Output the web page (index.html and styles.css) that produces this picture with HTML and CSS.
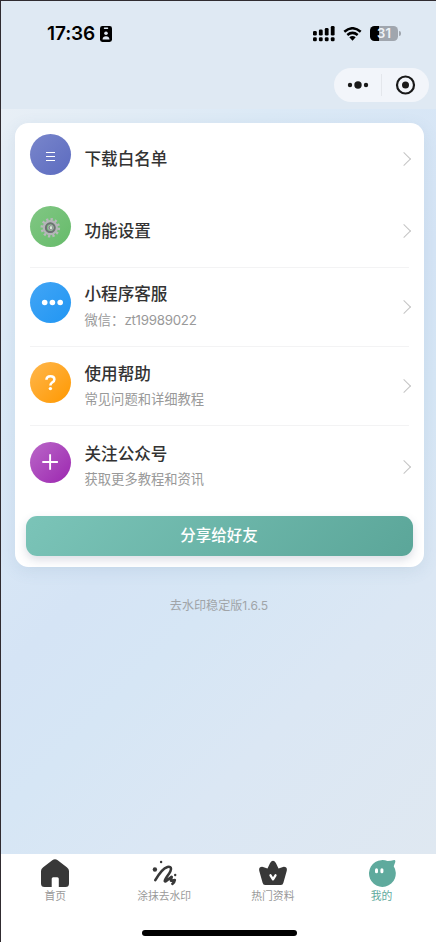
FILE: index.html
```html
<!DOCTYPE html>
<html lang="zh-CN">
<head>
<meta charset="utf-8">
<title>我的</title>
<link rel="stylesheet" href="styles.css">
</head>
<body>
<div class="app">
  <header class="top">
    <div class="status">
      <span class="clock">17:36</span>
      <svg class="badge" width="12" height="16" viewBox="0 0 12 16"><rect width="12" height="16" rx="2.4"/><rect x="3.8" y="1.6" width="4.4" height="1.3" rx=".6" fill="#dfe9f3"/><circle cx="6" cy="7.2" r="1.8" fill="#dfe9f3"/><path d="M2.5 13.6c.2-2.600 1.500-3.400 3.500-3.400s3.300.8 3.500 3.400z" fill="#dfe9f3"/></svg>
      <span class="spacer"></span>
      <svg class="signal" width="22" height="16" viewBox="0 0 22 16"><rect x="0" y="5" width="3.800" height="4.500" rx="1.300"/><rect x="5.900" y="3.500" width="3.800" height="6" rx="1.300"/><rect x="11.800" y="2" width="3.800" height="7.500" rx="1.300"/><rect x="17.800" y="0" width="3.800" height="9.500" rx="1.300"/><rect x="0" y="11.300" width="3.800" height="4" rx="1.300"/><rect x="5.900" y="11.300" width="3.800" height="4" rx="1.300"/><rect x="11.800" y="11.300" width="3.800" height="4" rx="1.300"/><rect x="17.800" y="11.300" width="3.800" height="4" rx="1.300"/></svg>
      <svg class="wifi" width="19" height="14" viewBox="0 0 19 14"><path d="M1.300 4.800Q9.500-2.300 17.700 4.800M4.300 8Q9.500 3.700 14.700 8" fill="none" stroke="#000" stroke-width="2.500"/><path d="M6.300 10.300Q9.500 7.600 12.700 10.300L9.500 13.800z"/></svg>
      <span class="battery"><span class="cell">31</span><i class="tip"></i></span>
    </div>
    <div class="capsule">
      <svg width="95" height="34" viewBox="0 0 95 34"><g fill="#191919"><circle cx="16" cy="17" r="2.200"/><circle cx="24" cy="17" r="3.700"/><circle cx="32" cy="17" r="2.200"/><circle cx="71.500" cy="17" r="3.500"/></g><circle cx="71.500" cy="17" r="8.500" fill="none" stroke="#191919" stroke-width="2.200"/><path d="M47.500 6v22" stroke="#e4e7ec"/></svg>
    </div>
  </header>
  <main class="page">
    <section class="card">
      <div class="row plain">
        <span class="dot indigo"><svg width="41" height="41" viewBox="0 0 41 41"><path d="M16 18.500h9M16 22.500h9M16 26.500h9" stroke="#fff" stroke-width="1.200"/></svg></span>
        <div class="words"><b>下载白名单</b></div><i class="arrow"></i>
      </div>
      <div class="row plain lined">
        <span class="dot green"><svg width="41" height="41" viewBox="0 0 41 41"><g fill="none"><circle cx="20.300" cy="21.700" r="8.300" stroke="#b9b8bc" stroke-width="3" stroke-dasharray="2.200 2.146"/><circle cx="20.300" cy="21.700" r="6.400" stroke="#b4b4b8" stroke-width="2.400"/><circle cx="20.300" cy="21.700" r="4.400" stroke="#6d6f73" stroke-width="2"/><circle cx="20.700" cy="21.700" r="2.600" fill="#85888b" stroke="#a9acae" stroke-width="1"/><ellipse cx="21" cy="21.700" rx="1.200" ry="1.600" fill="#d9ead9"/></g></svg></span>
        <div class="words"><b>功能设置</b></div><i class="arrow"></i>
      </div>
      <div class="row lined up">
        <span class="dot blue"><svg width="41" height="41" viewBox="0 0 41 41" fill="#fff"><circle cx="14.700" cy="20.500" r="2.800"/><circle cx="22.400" cy="20.500" r="2.800"/><circle cx="30.200" cy="20.500" r="2.800"/></svg></span>
        <div class="words"><b>小程序客服</b><small>微信：<span class="num">zt19989022</span></small></div><i class="arrow"></i>
      </div>
      <div class="row lined">
        <span class="dot orange"><svg width="41" height="41" viewBox="0 0 41 41"><path d="M16.400 17.700c.1-2.300 1.700-3.500 4-3.500 2.400 0 4 1.200 4 3.200 0 3-4 2.900-4 6" fill="none" stroke="#fff" stroke-width="2.500"/><circle cx="20.400" cy="26.600" r="1.700" fill="#fff"/></svg></span>
        <div class="words"><b>使用帮助</b><small>常见问题和详细教程</small></div><i class="arrow"></i>
      </div>
      <div class="row down">
        <span class="dot purple"><svg width="41" height="41" viewBox="0 0 41 41"><path d="M12.300 20h15.600M20.100 12.200v15.600" stroke="#fff" stroke-width="1.900"/></svg></span>
        <div class="words"><b>关注公众号</b><small>获取更多教程和资讯</small></div><i class="arrow"></i>
      </div>
      <button class="share">分享给好友</button>
    </section>
    <p class="version">去水印稳定版1.6.5</p>
  </main>
  <nav class="tabs">
    <a class="tab"><svg width="30" height="30" viewBox="0 0 30 30"><path fill="#383838" d="M12.300 1.300Q15-.8 17.700 1.300L26.800 8.200Q29 9.900 29 12V24.500Q29 28 25.500 28H18.800V19.800Q18.800 18.300 17.300 18.300H13.200Q11.700 18.300 11.700 19.800V28H4.500Q1 28 1 24.500V12Q1 9.900 3.200 8.200z"/></svg><span>首页</span></a>
    <a class="tab"><svg width="30" height="30" viewBox="0 0 30 30"><g fill="#383838"><circle cx="5.900" cy="10.500" r="2.200"/><circle cx="12.100" cy="3" r="1.200"/><circle cx="26.200" cy="16" r="1.200"/></g><path d="M6.300 21.200C9.500 15.500 14 9.200 18.500 7.900 22 7 22.700 9.300 21.400 12.200 19.700 16 15.500 20 15.800 22.100 16.700 23.600 20.200 19 22.400 17.800 23.500 17.800 20.900 21.300 22.200 21.800L25.800 21.100Q25.500 23.500 23.400 24.900" fill="none" stroke="#383838" stroke-width="2.600" stroke-linecap="round" stroke-linejoin="round"/></svg><span>涂抹去水印</span></a>
    <a class="tab"><svg width="30" height="30" viewBox="0 0 30 30"><path fill="#383838" d="M9.500 9.600L12.100 4Q15-.4 17.900 4L20.500 9.600 25 7.900Q29.700 7.400 28.700 12L25.400 23.700Q24.900 26 22.900 26H7.100Q5.100 26 4.600 23.700L1.300 12Q.3 7.400 5 7.900z"/><path d="M12.500 16.300L15 20.300 17.500 16.300" fill="none" stroke="#fff" stroke-width="2.300" stroke-linecap="round" stroke-linejoin="round"/></svg><span>热门资料</span></a>
    <a class="tab active"><svg width="30" height="30" viewBox="0 0 30 30"><path fill="#5faa9d" d="M27.200 1Q28.700 1 28.200 3.200L26.700 7.300A13.400 13.400 0 1 1 20.500 2.100Q24 2 27.200 1z"/><rect x="8" y="9.300" width="3" height="5" rx="1.500" fill="#fff"/><rect x="13.400" y="9.300" width="3" height="5" rx="1.500" fill="#fff"/></svg><span>我的</span></a>
    <i class="home-bar"></i>
  </nav>
</div>
</body>
</html>
```

FILE: styles.css
```css
* { box-sizing: border-box; }
body { margin: 0; font-family: Inter, "Noto Sans CJK SC", sans-serif; }
svg { display: block; flex: none; }
.app {
  width: 436px; height: 942px; display: flex; flex-direction: column;
  border-top: 1px solid #302b30; border-left: 1px solid #302b30;
  overflow: hidden;
}
.top { height: 108px; flex: none; background: #dfe9f3; }
.status { height: 67px; padding: 0 29px 2px 46px; display: flex; align-items: center; }
.clock { font-size: 19px; line-height: 24px; font-weight: 600; width: 53px; letter-spacing: -0.1px; white-space: nowrap; }
.spacer { flex: 1; }
.wifi { margin: 0 8px 0 8px; }
.battery { display: flex; align-items: center; width: 37px; }
.cell {
  width: 28px; height: 15px; border-radius: 4.5px; text-align: center;
  background: linear-gradient(90deg, #000 0 9px, #a0a6ae 9px);
  color: #eef2f6; font-size: 13px; line-height: 15px; font-weight: 600;
}
.tip { width: 2px; height: 5px; margin-left: 1px; border-radius: 0 2px 2px 0; background: #a0a6ae; }
.capsule { width: 95px; height: 34px; border-radius: 17px; margin-left: 333px; background: #f2f5fa; }
.page {
  flex: 1; padding: 14px 12.500px 0 13.500px;
  background: linear-gradient(135deg, #e8eff6 0%, #dbe9f6 23%, #d5e4f5 48%, #d6e6f5 60%, #dbe7f4 76%, #dfe8f1 100%);
}
.card {
  height: 444px; border-radius: 13.500px; background: #fff; padding: 0 11px;
  box-shadow: 0 4px 16px rgba(80, 120, 160, .12);
}
.row { height: 79.400px; margin: 0 4px 0 4.500px; padding-top: 15px; display: flex; align-items: flex-start; }
.row.plain { height: 72px; padding-top: 11px; }
.row.up { padding-top: 14.400px; }
.row.down { padding-top: 15.700px; }
.row.lined { border-bottom: 1px solid #f3f3f4; }
.row.plain.lined { height: 72.500px; }
.dot { width: 41px; height: 41px; border-radius: 50%; flex: none; }
.indigo { background: linear-gradient(135deg, #7986cb, #5c6bc0); }
.green { background: linear-gradient(135deg, #81c784, #66bb6a); }
.blue { background: linear-gradient(135deg, #42a5f5, #2196f3); }
.orange { background: linear-gradient(135deg, #ffb74d, #ff9800); }
.purple { background: linear-gradient(135deg, #ba68c8, #9c27b0); }
.words { flex: 1; margin-left: 13.500px; display: flex; flex-direction: column; }
.words b { font-size: 16.600px; line-height: 24px; font-weight: 500; color: #333; }
.row.plain b { padding-top: 13px; }
.row.up b { padding-top: 0.600px; }
.words small { font-size: 13.300px; line-height: 20px; margin-top: 3.500px; color: #999; }
.down small { margin-top: 3px; }
.num { letter-spacing: -0.25px; }
.arrow {
  align-self: center; width: 10px; height: 10px; margin: 0 0 14.500px 0;
  border-top: 1.500px solid #c4c4c4; border-right: 1.500px solid #c4c4c4; transform: rotate(45deg);
}
.plain .arrow { margin-bottom: 11px; }
.share {
  display: block; width: 387px; height: 40px; margin-top: 10px; padding: 0;
  border: 0; border-radius: 11px; background: linear-gradient(135deg, #7bc4b8, #5ba699);
  color: #fff; font: 500 15.500px/40px Inter, "Noto Sans CJK SC", sans-serif;
  box-shadow: 0 4px 10px rgba(60, 70, 110, .18);
}
.version { margin: 29px 0 0; text-align: center; font-size: 12.100px; line-height: 20px; color: #a0a4a8; }
.tabs { height: 88px; flex: none; background: #fff; display: flex; position: relative; }
.tab { flex: 1; display: flex; flex-direction: column; align-items: center; padding-top: 5px; font-size: 10.800px; line-height: 16px; color: #999; }
.tab span { margin-top: 0; }
.tab.active { color: #5faa9d; }
.home-bar { position: absolute; left: 140.500px; bottom: 6px; width: 155.500px; height: 6px; border-radius: 3px; background: #000; }
```
